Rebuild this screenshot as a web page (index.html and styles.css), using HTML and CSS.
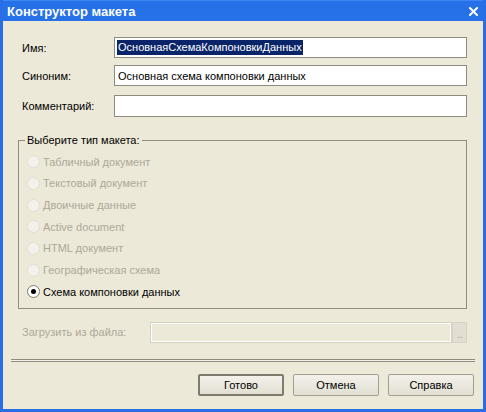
FILE: index.html
```html
<!DOCTYPE html>
<html>
<head>
<meta charset="utf-8">
<link rel="stylesheet" href="styles.css">
</head>
<body>
<div class="window">
  <div class="titlebar">
    <span class="title">Конструктор макета</span>
    <span class="close"><svg width="9" height="9" viewBox="0 0 9 9"><path d="M1 1L8 8M8 1L1 8" stroke="#fff" stroke-width="2" stroke-linecap="square"/></svg></span>
  </div>
  <div class="content">
    <div class="field f1"><span class="lbl">Имя:</span><div class="input"><span class="sel">ОсновнаяСхемаКомпоновкиДанных</span></div></div>
    <div class="field f2"><span class="lbl">Синоним:</span><div class="input">Основная схема компоновки данных</div></div>
    <div class="field f3"><span class="lbl">Комментарий:</span><div class="input"></div></div>

    <fieldset class="group">
      <legend>Выберите тип макета:</legend>
      <div class="radio dis"><span class="dot"></span>Табличный документ</div>
      <div class="radio dis"><span class="dot"></span>Текстовый документ</div>
      <div class="radio dis"><span class="dot"></span>Двоичные данные</div>
      <div class="radio dis"><span class="dot"></span>Active document</div>
      <div class="radio dis"><span class="dot"></span>HTML документ</div>
      <div class="radio dis"><span class="dot"></span>Географическая схема</div>
      <div class="radio on"><span class="dot"></span>Схема компоновки данных</div>
    </fieldset>

    <div class="loadrow">
      <span class="lbl2">Загрузить из файла:</span>
      <div class="finput"></div>
      <div class="browse">...</div>
    </div>

    <div class="sep"></div>

    <div class="buttons">
      <div class="btn def">Готово</div>
      <div class="btn">Отмена</div>
      <div class="btn">Справка</div>
    </div>
  </div>
</div>
</body>
</html>
```
FILE: styles.css
```css
* { box-sizing: border-box; }
body {
  margin: 0;
  font-family: "Liberation Sans", Arial, sans-serif;
  font-size: 11px;
  color: #000;
}
.window {
  width: 486px;
  height: 412px;
  background: #2a6ee6;
  padding: 0 3px 3px;
  display: flex;
  flex-direction: column;
}
.titlebar {
  height: 21px;
  flex: none;
  display: flex;
  align-items: center;
  justify-content: space-between;
  padding: 0 5px 0 4px;
  background: #2670e8;
  border-top: 1px solid #3d86f2;
}
.title {
  color: #fff;
  font-weight: bold;
  font-size: 13px;
  line-height: 15px;
}
.close { display: flex; margin-top: 1px; }
.content {
  flex: 1;
  background: #ece9d8;
  padding: 16px 16px 0 15px;
  display: flex;
  flex-direction: column;
}
.field {
  display: flex;
  align-items: center;
  height: 21px;
  flex: none;
}
.f2 { margin-top: 7px; }
.f3 { margin-top: 9px; height: 22px; }
.lbl {
  width: 96px;
  padding-left: 4px;
}
.input {
  flex: 1;
  height: 100%;
  border: 1px solid #8f8b7e;
  background: #fff;
  padding: 0 3px;
  display: flex;
  align-items: center;
  white-space: nowrap;
}
.sel {
  background: #0a246a;
  color: #fff;
  line-height: 15px;
  padding: 0 1px;
  margin-left: -1px;
}
.group {
  margin: 16px 0 0;
  border: 1px solid #918c7f;
  padding: 4px 0 5px 8px;
  flex: none;
}
.group legend {
  padding: 0 2px;
  margin-left: -2px;
  line-height: 14px;
}
.radio {
  height: 21.67px;
  display: flex;
  align-items: center;
  gap: 3px;
}
.radio.dis { color: #aca899; }
.dot {
  width: 13px;
  height: 13px;
  border-radius: 50%;
  flex: none;
  display: flex;
  align-items: center;
  justify-content: center;
}
.dis .dot {
  background: #f3f1e9;
  border: 1px solid #e2dfd3;
}
.on .dot {
  background: #fff;
  border: 1px solid #7f7b6f;
}
.on .dot::after {
  content: "";
  width: 5px;
  height: 5px;
  border-radius: 50%;
  background: #000;
}
.loadrow {
  margin-top: 13px;
  height: 21px;
  display: flex;
  align-items: stretch;
  flex: none;
}
.lbl2 {
  width: 132px;
  padding-left: 4px;
  color: #aca899;
  display: flex;
  align-items: center;
}
.finput {
  flex: 1;
  border: 1px solid #d4d0c3;
  box-shadow: inset 0 0 0 1px #fff;
  background: #ece9d8;
}
.browse {
  width: 15px;
  background: #e2dfd2;
  border: 1px solid #d6d2c5;
  color: #aca899;
  font-size: 10px;
  display: flex;
  align-items: flex-end;
  justify-content: center;
  padding-bottom: 3px;
  line-height: 8px;
  letter-spacing: -1px;
}
.sep {
  margin: 16px -8px 0 -7px;
  height: 3px;
  border-top: 1px solid #8f8b7e;
  border-bottom: 1px solid #8f8b7e;
  background: #f4f2ea;
  flex: none;
}
.buttons {
  margin: 12px -7px 0 0;
  display: flex;
  justify-content: flex-end;
  gap: 9px;
}
.btn {
  width: 86px;
  height: 22px;
  border: 1px solid #a29e91;
  border-radius: 2px;
  background: linear-gradient(#f3f1ea, #e2dfd2);
  display: flex;
  align-items: center;
  justify-content: center;
}
.btn.def {
  border: 2px solid #7e7a6d;
}
```
